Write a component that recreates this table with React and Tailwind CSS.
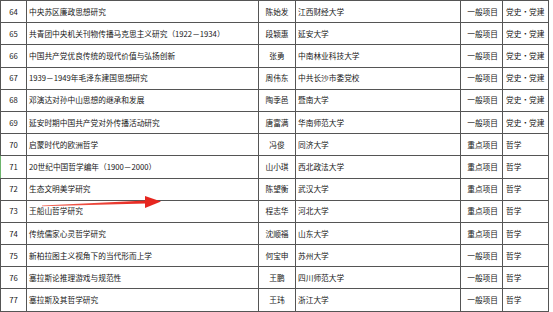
import React from 'react';

const rows = [
  { no: '64', title: '中央苏区廉政思想研究', name: '陈始发', org: '江西财经大学', type: '一般项目', cat: '党史・党建' },
  { no: '65', title: '共青团中央机关刊物传播马克思主义研究（1922－1934）', name: '段颖惠', org: '延安大学', type: '一般项目', cat: '党史・党建' },
  { no: '66', title: '中国共产党优良传统的现代价值与弘扬创新', name: '张勇', org: '中南林业科技大学', type: '一般项目', cat: '党史・党建' },
  { no: '67', title: '1939－1949年毛泽东建国思想研究', name: '周伟东', org: '中共长沙市委党校', type: '一般项目', cat: '党史・党建' },
  { no: '68', title: '邓演达对孙中山思想的继承和发展', name: '陶季邑', org: '暨南大学', type: '一般项目', cat: '党史・党建' },
  { no: '69', title: '延安时期中国共产党对外传播活动研究', name: '唐富满', org: '华南师范大学', type: '一般项目', cat: '党史・党建' },
  { no: '70', title: '启蒙时代的欧洲哲学', name: '冯俊', org: '同济大学', type: '重点项目', cat: '哲学' },
  { no: '71', title: '20世纪中国哲学编年（1900－2000）', name: '山小琪', org: '西北政法大学', type: '重点项目', cat: '哲学', mark: true },
  { no: '72', title: '生态文明美学研究', name: '陈望衡', org: '武汉大学', type: '重点项目', cat: '哲学' },
  { no: '73', title: '王船山哲学研究', name: '程志华', org: '河北大学', type: '重点项目', cat: '哲学' },
  { no: '74', title: '传统儒家心灵哲学研究', name: '沈顺福', org: '山东大学', type: '重点项目', cat: '哲学' },
  { no: '75', title: '新柏拉图主义视角下的当代形而上学', name: '何宝申', org: '苏州大学', type: '一般项目', cat: '哲学' },
  { no: '76', title: '塞拉斯论推理游戏与规范性', name: '王鹏', org: '四川师范大学', type: '一般项目', cat: '哲学' },
  { no: '77', title: '塞拉斯及其哲学研究', name: '王玮', org: '浙江大学', type: '一般项目', cat: '哲学' },
];

const cell = 'border-l border-[#555] flex items-center whitespace-nowrap overflow-hidden';

export default function App() {
  return (
    <div className="relative w-[553px] h-[312px] overflow-hidden bg-white text-[#161616] text-[7.7px] leading-none font-['Noto_Sans_CJK_SC',sans-serif]">
      <div className="w-[549px] border-t border-[#555]">
        {rows.map((r) => (
          <div
            key={r.no}
            className="grid grid-cols-[26px_232px_37px_165px_42px_47px] h-[22.2px] border-b border-[#555]"
          >
            <div className={`${cell} justify-center ${r.mark ? 'border-l-[#6cb36c]' : ''}`}>{r.no}</div>
            <div className={`${cell} pl-[2px]`}>{r.title}</div>
            <div className={`${cell} justify-center`}>{r.name}</div>
            <div className={`${cell} pl-[2px]`}>{r.org}</div>
            <div className={`${cell} justify-end pr-[4px]`}>{r.type}</div>
            <div className={`${cell} pl-[3px] border-r`}>{r.cat}</div>
          </div>
        ))}
      </div>

      {/* red annotation arrow */}
      <svg className="absolute left-0 top-0" width="553" height="312" viewBox="0 0 553 312">
        <defs>
          <linearGradient id="arr" x1="0" x2="1" y1="0" y2="0">
            <stop offset="0" stopColor="#f26a5a" />
            <stop offset="1" stopColor="#e6261f" />
          </linearGradient>
        </defs>
        <polygon points="42,205.5 146,200.6 146,203.6 42,206.3" fill="url(#arr)" />
        <polygon points="145,196 161,201.6 145,208" fill="#e6261f" />
      </svg>
    </div>
  );
}
